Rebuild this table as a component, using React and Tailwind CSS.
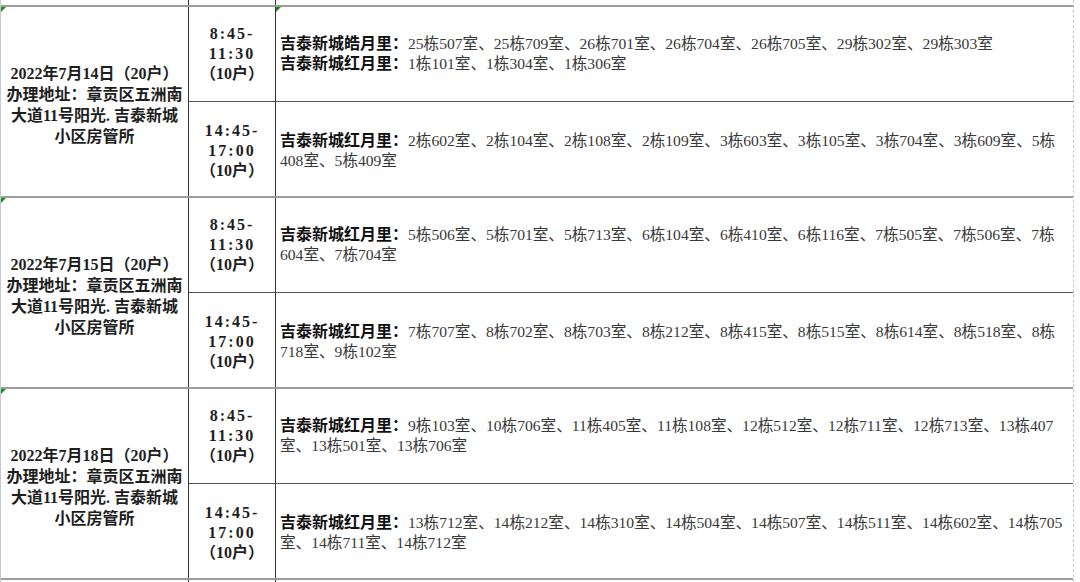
import React from 'react'

const FONT = { fontFamily: "'Liberation Serif', 'Noto Sans CJK SC', serif" }

const GROUPS = [
  {
    date: '2022年7月14日（20户）',
    rows: [
      {
        time: ['8:45-', '11:30'],
        lines: [
          ['吉泰新城皓月里：', '25栋507室、25栋709室、26栋701室、26栋704室、26栋705室、29栋302室、29栋303室'],
          ['吉泰新城红月里：', '1栋101室、1栋304室、1栋306室'],
        ],
        mark: true,
      },
      {
        time: ['14:45-', '17:00'],
        lines: [
          ['吉泰新城红月里：', '2栋602室、2栋104室、2栋108室、2栋109室、3栋603室、3栋105室、3栋704室、3栋609室、5栋'],
          ['', '408室、5栋409室'],
        ],
      },
    ],
  },
  {
    date: '2022年7月15日（20户）',
    rows: [
      {
        time: ['8:45-', '11:30'],
        lines: [
          ['吉泰新城红月里：', '5栋506室、5栋701室、5栋713室、6栋104室、6栋410室、6栋116室、7栋505室、7栋506室、7栋'],
          ['', '604室、7栋704室'],
        ],
      },
      {
        time: ['14:45-', '17:00'],
        lines: [
          ['吉泰新城红月里：', '7栋707室、8栋702室、8栋703室、8栋212室、8栋415室、8栋515室、8栋614室、8栋518室、8栋'],
          ['', '718室、9栋102室'],
        ],
      },
    ],
  },
  {
    date: '2022年7月18日（20户）',
    rows: [
      {
        time: ['8:45-', '11:30'],
        lines: [
          ['吉泰新城红月里：', '9栋103室、10栋706室、11栋405室、11栋108室、12栋512室、12栋711室、12栋713室、13栋407'],
          ['', '室、13栋501室、13栋706室'],
        ],
      },
      {
        time: ['14:45-', '17:00'],
        lines: [
          ['吉泰新城红月里：', '13栋712室、14栋212室、14栋310室、14栋504室、14栋507室、14栋511室、14栋602室、14栋705'],
          ['', '室、14栋711室、14栋712室'],
        ],
      },
    ],
  },
]

function Mark() {
  return (
    <span className="absolute left-0 top-0 w-0 h-0 border-t-[5px] border-r-[5px] border-t-[#1c8c1c] border-r-transparent" />
  )
}

function Group({ group }) {
  return (
    <div className="grid grid-cols-[188px_87px_1fr] h-[191px] border-t-2 border-[#9c9c9c]">
      <div className="relative row-span-2 border-r border-[#333] flex flex-col items-center justify-center text-center text-[16px] leading-[21px] font-bold text-[#1e1e1e] pt-[6px]">
        <Mark />
        <div>{group.date}</div>
        <div>办理地址：章贡区五洲南</div>
        <div>大道11号阳光. 吉泰新城</div>
        <div>小区房管所</div>
      </div>
      {group.rows.map((row, i) => (
        <React.Fragment key={i}>
          <div
            className={`flex flex-col items-center justify-center border-r border-[#333] text-[16px] leading-[20px] font-bold text-[#1e1e1e] ${
              i === 0 ? 'h-[95px] border-b border-b-[#555]' : 'h-[94px] pt-[4px]'
            }`}
          >
            <div className="tracking-[2px]">{row.time[0]}</div>
            <div className="tracking-[2px]">{row.time[1]}</div>
            <div>（10户）</div>
          </div>
          <div
            className={`relative flex flex-col justify-center pl-[4px] leading-[20px] ${
              i === 0 ? 'h-[95px] border-b border-[#555]' : 'h-[94px] pt-[4px]'
            }`}
          >
            {row.mark && <Mark />}
            {row.lines.map(([head, body], j) => (
              <div key={j} className="whitespace-nowrap">
                {head && <span className="font-bold text-[16px] text-[#111]">{head}</span>}
                <span className="text-[15.6px] text-[#383838]">{body}</span>
              </div>
            ))}
          </div>
        </React.Fragment>
      ))}
    </div>
  )
}

export default function App() {
  return (
    <div className="w-[1080px] h-[582px] bg-white overflow-hidden flex" style={FONT}>
      <div className="w-[1074px] h-full border-l border-[#c3c9da] border-r border-r-[#c8c8c8] border-dashed border-l-solid flex flex-col" style={{ borderLeftStyle: 'solid' }}>
        <div className="grid grid-cols-[188px_87px_1fr] h-[5px] shrink-0">
          <div className="border-r border-[#333]" />
          <div className="border-r border-[#333]" />
          <div />
        </div>
        {GROUPS.map((g, i) => (
          <Group key={i} group={g} />
        ))}
        <div className="grid grid-cols-[188px_87px_1fr] flex-1 border-t-2 border-[#9c9c9c]">
          <div className="border-r border-[#333]" />
          <div className="border-r border-[#333]" />
          <div />
        </div>
      </div>
      <div className="flex-1" />
    </div>
  )
}
